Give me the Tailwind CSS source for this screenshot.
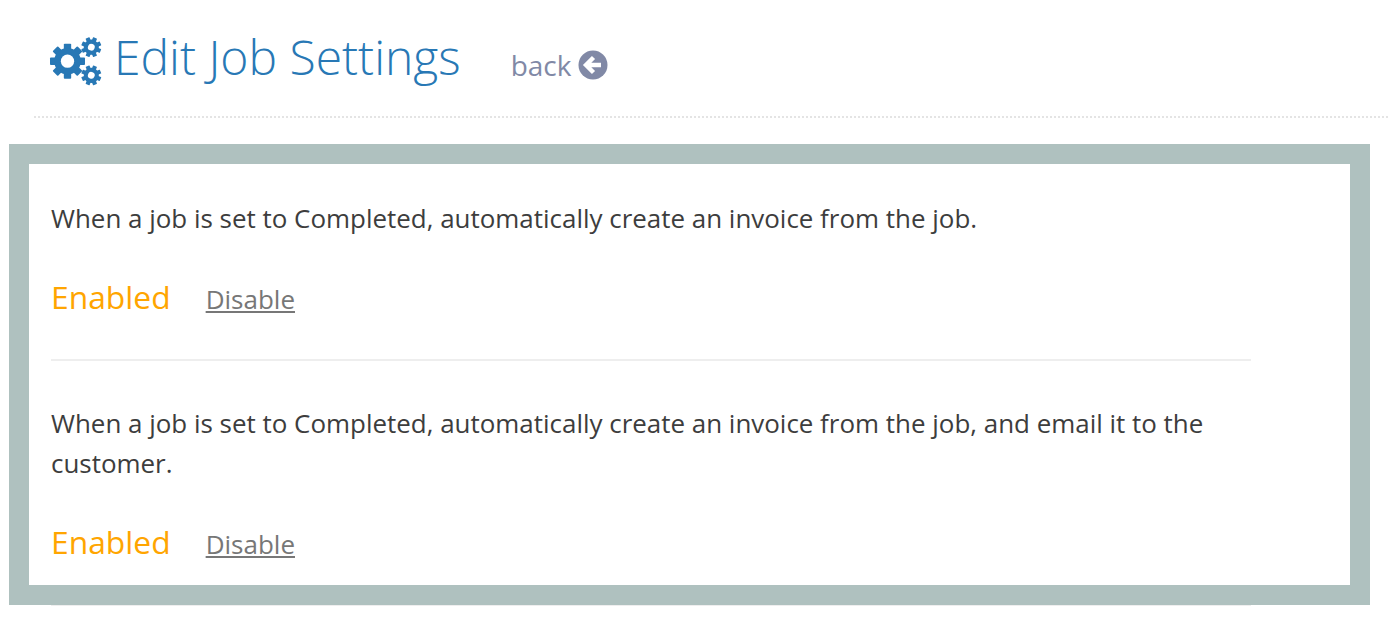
<!DOCTYPE html>
<html lang="en">
<head>
    <meta charset="UTF-8">
    <meta name="viewport" content="width=device-width, initial-scale=1.0">
    <title>Edit Job Settings</title>
    <script src="https://cdn.jsdelivr.net/npm/@tailwindcss/browser@4"></script>
</head>
<body class="bg-white h-[643px] overflow-hidden font-['Open_Sans',sans-serif]">
    <header class="ml-[34px] h-[118px] pl-4 flex items-center border-b-2 border-dotted border-[#e4e4e4]">
        <svg class="w-[52px] h-[50px] shrink-0 overflow-visible text-[#2878b5]" viewBox="0 0 52 50" fill="currentColor">
            <defs>
                <g id="teeth">
                    <rect x="-2.1" y="-10" width="4.2" height="20" rx="0.5"/>
                    <rect x="-2.1" y="-10" width="4.2" height="20" rx="0.5" transform="rotate(45)"/>
                    <rect x="-2.1" y="-10" width="4.2" height="20" rx="0.5" transform="rotate(90)"/>
                    <rect x="-2.1" y="-10" width="4.2" height="20" rx="0.5" transform="rotate(135)"/>
                    <circle r="7.6"/>
                </g>
            </defs>
            <g transform="translate(17.5 28.2) scale(1.75)">
                <use href="#teeth"/>
                <circle r="3.8" fill="#fff"/>
            </g>
            <g transform="translate(41.3 14.2) rotate(22.5)">
                <use href="#teeth"/>
                <circle r="3.4" fill="#fff"/>
            </g>
            <g transform="translate(41.3 42.3) rotate(22.5)">
                <use href="#teeth"/>
                <circle r="3.4" fill="#fff"/>
            </g>
        </svg>
        <h1 class="ml-3 mb-[2px] text-[48px] leading-none font-light text-[#2878b5]">Edit Job Settings</h1>
        <a href="#" class="ml-[50px] mt-[14px] flex items-center gap-[7px] text-[28px] leading-none text-[#8189a6]">
            back
            <svg class="w-[30px] h-[30px]" viewBox="0 0 30 30">
                <circle cx="15" cy="15" r="14.5" fill="currentColor"/>
                <path d="M15.5 7.5 8 15l7.5 7.5M8.5 15H23" fill="none" stroke="#fff" stroke-width="4.4"/>
            </svg>
        </a>
    </header>

    <section class="mt-[26px] ml-[9px] w-[1361px] h-[461px] border-[20px] border-[#afc1bf] px-[22px] text-[#3d3d3d] text-[25.95px] leading-[40px]">
        <div class="w-[1200px] h-[197px] pt-[34px] border-b-2 border-[#eeeeee]">
            <p>When a job is set to Completed, automatically create an invoice from the job.</p>
            <div class="mt-[39px] flex items-baseline">
                <span class="text-[31.8px] text-[#ffa500]">Enabled</span>
                <a href="#" class="ml-[35px] text-[26px] text-[#777] underline">Disable</a>
            </div>
        </div>
        <div class="w-[1200px] pt-[42px]">
            <p>When a job is set to Completed, automatically create an invoice from the job, and email it to the customer.</p>
            <div class="mt-[39px] flex items-baseline">
                <span class="text-[31.8px] text-[#ffa500]">Enabled</span>
                <a href="#" class="ml-[35px] text-[26px] text-[#777] underline">Disable</a>
            </div>
        </div>
    </section>
    <div class="ml-[51px] w-[1200px] h-px bg-[#eeeeee]"></div>
</body>
</html>
